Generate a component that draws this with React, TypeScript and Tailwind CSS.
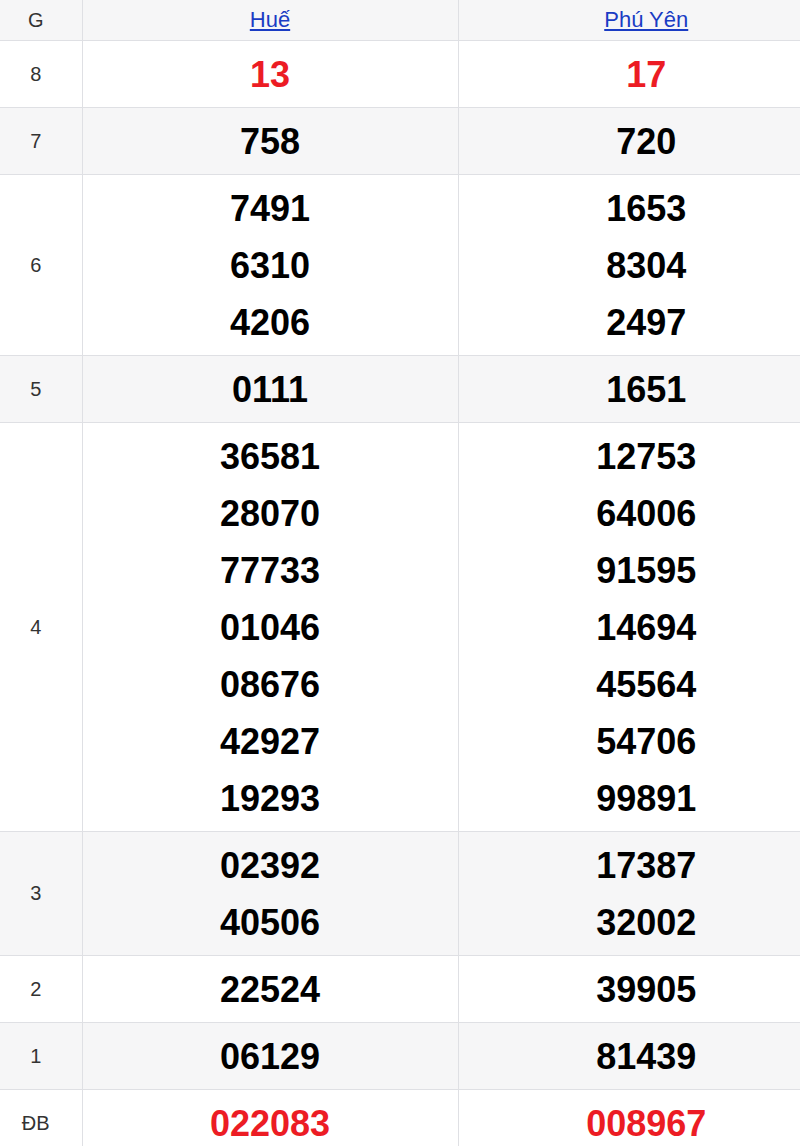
import * as React from "react";

type Row = { label: string; hue: string[]; phuYen: string[]; red?: boolean };

const rows: Row[] = [
  { label: "8", hue: ["13"], phuYen: ["17"], red: true },
  { label: "7", hue: ["758"], phuYen: ["720"] },
  { label: "6", hue: ["7491", "6310", "4206"], phuYen: ["1653", "8304", "2497"] },
  { label: "5", hue: ["0111"], phuYen: ["1651"] },
  {
    label: "4",
    hue: ["36581", "28070", "77733", "01046", "08676", "42927", "19293"],
    phuYen: ["12753", "64006", "91595", "14694", "45564", "54706", "99891"],
  },
  { label: "3", hue: ["02392", "40506"], phuYen: ["17387", "32002"] },
  { label: "2", hue: ["22524"], phuYen: ["39905"] },
  { label: "1", hue: ["06129"], phuYen: ["81439"] },
  { label: "ĐB", hue: ["022083"], phuYen: ["008967"], red: true },
];

function Numbers({ values, red }: { values: string[]; red?: boolean }) {
  return (
    <td className="border border-[#dfe0e4] pt-[5px] pb-[4px] text-center align-middle">
      {values.map((v) => (
        <div
          key={v}
          className={`text-[36px] font-bold leading-[57px] ${red ? "text-[#ec1c24]" : "text-black"}`}
        >
          {v}
        </div>
      ))}
    </td>
  );
}

export default function App() {
  // the table is wider than the window, so the right column is cut off
  return (
    <div className="w-[800px] overflow-hidden bg-white font-['Liberation_Sans',Arial,sans-serif]">
      <table className="w-[834px] table-fixed border-collapse border-hidden">
        <colgroup>
          <col className="w-[82px]" />
          <col className="w-[376px]" />
          <col className="w-[376px]" />
        </colgroup>
        <thead>
          <tr className="h-[40px] bg-[#f6f6f7]">
            <th className="border border-[#dfe0e4] pr-[10px] text-[20px] font-normal text-[#333]">G</th>
            <th className="border border-[#dfe0e4] text-[22px] font-normal">
              <a href="#" className="text-[#1a3cc4] underline">Huế</a>
            </th>
            <th className="border border-[#dfe0e4] text-[22px] font-normal">
              <a href="#" className="text-[#1a3cc4] underline">Phú Yên</a>
            </th>
          </tr>
        </thead>
        <tbody>
          {rows.map((r, i) => (
            <tr key={r.label} className={i % 2 === 1 ? "bg-[#f6f6f7]" : "bg-white"}>
              <td className="border border-[#dfe0e4] pr-[10px] text-center align-middle text-[20px] text-[#333]">
                {r.label}
              </td>
              <Numbers values={r.hue} red={r.red} />
              <Numbers values={r.phuYen} red={r.red} />
            </tr>
          ))}
        </tbody>
      </table>
    </div>
  );
}
